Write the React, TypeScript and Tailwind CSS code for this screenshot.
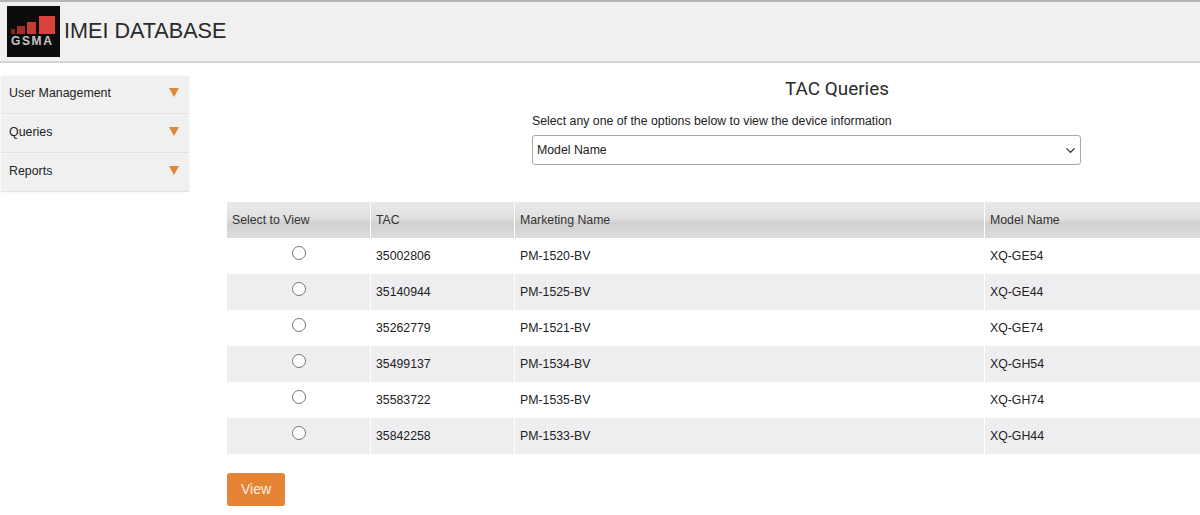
import React from 'react';
import { ChevronDown } from 'lucide-react';

const rows = [
  { tac: '35002806', name: 'PM-1520-BV', model: 'XQ-GE54' },
  { tac: '35140944', name: 'PM-1525-BV', model: 'XQ-GE44' },
  { tac: '35262779', name: 'PM-1521-BV', model: 'XQ-GE74' },
  { tac: '35499137', name: 'PM-1534-BV', model: 'XQ-GH54' },
  { tac: '35583722', name: 'PM-1535-BV', model: 'XQ-GH74' },
  { tac: '35842258', name: 'PM-1533-BV', model: 'XQ-GH44' },
];

const menu = ['User Management', 'Queries', 'Reports'];

function Logo() {
  return (
    <div className="relative h-[51px] w-[53px] shrink-0 bg-[#0c0c0c]">
      <svg viewBox="0 0 53 51" className="absolute inset-0 h-full w-full">
        <rect x="4" y="23" width="4" height="5" fill="#7d2420" />
        <rect x="10" y="20" width="8" height="8" fill="#a52c28" />
        <rect x="20" y="16" width="9" height="12" fill="#c83a34" />
        <rect x="32" y="10" width="16" height="18" fill="#d8433c" />
      </svg>
      <span className="absolute left-[4px] top-[29px] text-[12px] leading-[13px] font-bold tracking-[1.6px] text-[#c4c4c4]">GSMA</span>
    </div>
  );
}

export default function App() {
  return (
    <div className="h-[515px] w-[1200px] overflow-hidden bg-white font-['Liberation_Sans',Arial,sans-serif] text-[#222]">
      {/* Header */}
      <header className="flex h-[63px] items-center gap-[4px] border-t-2 border-b-2 border-t-[#b4b4b4] border-b-[#d4d4d4] bg-[#f0f0f0] pl-[7px]">
        <Logo />
        <h1 className="-mt-[2px] text-[21.6px] font-normal leading-none text-[#2a2a2a]">IMEI DATABASE</h1>
      </header>

      <div className="flex">
        {/* Sidebar */}
        <aside className="mt-[13px] ml-[1px] flex w-[188px] shrink-0 flex-col gap-[1px]">
          {menu.map((item) => (
            <div key={item} className="flex h-[38px] items-center justify-between border-b border-[#e2e2e2] bg-[#f0f0f0] pr-[10px] pl-[8px] text-[12.4px] text-[#222] shadow-[0_0_1px_#ddd]">
              <span className="-mt-[3px]">{item}</span>
              <span className="-mt-[4px] h-0 w-0 border-x-[5px] border-t-[9px] border-x-transparent border-t-[#e0883a]" />
            </div>
          ))}
        </aside>

        {/* Main */}
        <main className="min-w-0 flex-1 pl-[38px]">
          <div className="ml-[305px] w-[549px]">
            <h2 className="mt-[14px] ml-[253px] h-[24px] whitespace-nowrap font-['Roboto',sans-serif] text-[18.9px] leading-[24px] font-normal text-[#2b2b2b]">TAC Queries</h2>
            <p className="mt-[12px] h-[16px] text-[12.3px] leading-[16px] whitespace-nowrap text-[#222]">Select any one of the options below to view the device information</p>
            <div className="mt-[6px] flex h-[30px] items-center justify-between rounded-[3px] border border-[#a8a8a8] bg-white pr-[2px] pl-[4px] text-[12.3px]">
              <span>Model Name</span>
              <ChevronDown size={15} strokeWidth={1.8} className="text-[#222]" />
            </div>
          </div>

          <table className="mt-[37px] w-[1000px] table-fixed border-separate border-spacing-0 text-[12.3px]">
            <colgroup>
              <col className="w-[144px]" />
              <col className="w-[144px]" />
              <col className="w-[470px]" />
              <col className="w-[242px]" />
            </colgroup>
            <thead>
              <tr className="h-[36px] bg-[linear-gradient(#e9e9e9_0%,#e0e0e0_45%,#d0d0d0_60%,#dddddd_100%)] text-left text-[#333]">
                <th className="border-r border-white pl-[5px] font-normal">Select to View</th>
                <th className="border-r border-white pl-[5px] font-normal">TAC</th>
                <th className="border-r border-white pl-[5px] font-normal">Marketing Name</th>
                <th className="pl-[5px] font-normal">Model Name</th>
              </tr>
            </thead>
            <tbody>
              {rows.map((row, i) => (
                <tr key={row.tac} className={i % 2 === 1 ? 'h-[36px] bg-[#eeeef0]' : 'h-[36px] bg-white'}>
                  <td className="border-r border-white">
                    <div className="-mt-[6px] ml-[65px] h-[14px] w-[14px] rounded-full border border-[#777] bg-white" />
                  </td>
                  <td className="border-r border-white pl-[5px]">{row.tac}</td>
                  <td className="border-r border-white pl-[5px]">{row.name}</td>
                  <td className="pl-[5px]">{row.model}</td>
                </tr>
              ))}
            </tbody>
          </table>

          <button className="mt-[19px] h-[33px] w-[58px] rounded-[3px] bg-[#e58435] text-[14px] text-[#fbeee2]">View</button>
        </main>
      </div>
    </div>
  );
}
